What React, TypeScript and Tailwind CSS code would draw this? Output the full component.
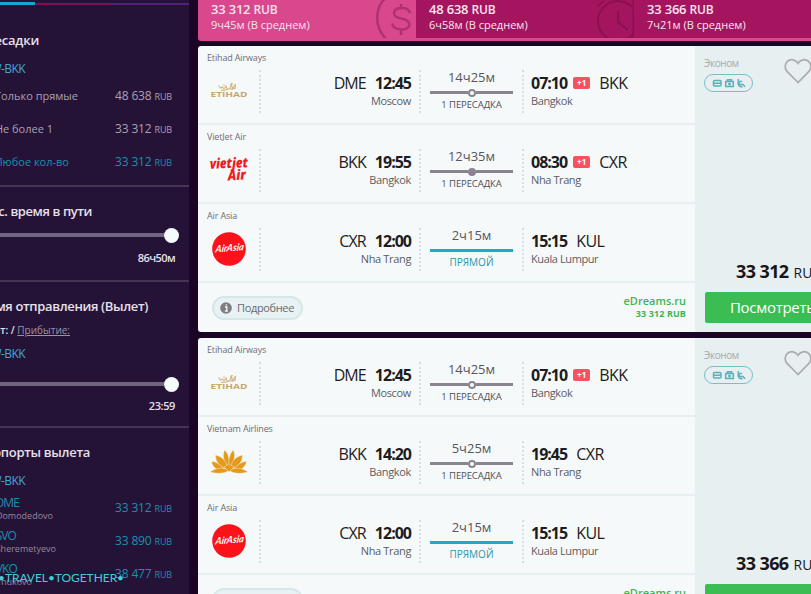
import React from 'react';

interface Leg {
    airline: string;
    logo: 'etihad' | 'vietjet' | 'airasia' | 'vietnam';
    from: string;
    fromCity: string;
    depart: string;
    duration: string;
    stop?: 'ring' | 'dot';
    arrive: string;
    nextDay?: boolean;
    to: string;
    toCity: string;
}

const etihad: Leg = {
    airline: 'Etihad Airways', logo: 'etihad', from: 'DME', fromCity: 'Moscow', depart: '12:45',
    duration: '14ч25м', stop: 'ring', arrive: '07:10', nextDay: true, to: 'BKK', toCity: 'Bangkok',
};

const airAsia: Leg = {
    airline: 'Air Asia', logo: 'airasia', from: 'CXR', fromCity: 'Nha Trang', depart: '12:00',
    duration: '2ч15м', arrive: '15:15', to: 'KUL', toCity: 'Kuala Lumpur',
};

const tickets: { price: string; legs: Leg[] }[] = [
    {
        price: '33 312',
        legs: [
            etihad,
            {
                airline: 'VietJet Air', logo: 'vietjet', from: 'BKK', fromCity: 'Bangkok', depart: '19:55',
                duration: '12ч35м', stop: 'dot', arrive: '08:30', nextDay: true, to: 'CXR', toCity: 'Nha Trang',
            },
            airAsia,
        ],
    },
    {
        price: '33 366',
        legs: [
            etihad,
            {
                airline: 'Vietnam Airlines', logo: 'vietnam', from: 'BKK', fromCity: 'Bangkok', depart: '14:20',
                duration: '5ч25м', stop: 'ring', arrive: '19:45', to: 'CXR', toCity: 'Nha Trang',
            },
            airAsia,
        ],
    },
];

const Logo = ({ name }: { name: Leg['logo'] }) => {
    if (name === 'etihad') {
        return (
            <svg width="40" height="34" viewBox="0 0 40 34" fill="none">
                <path d="M9.500 11.500l2 2.500 2-1 1.500 2 2-3 1 3h2.500l2-4.500 1 4.500 3-5-.5 5M12 16.200c3 .8 5 0 7-1s5 1 7-1M21 10.500l3-1M15 10.500v1.500" stroke="#d3b987" strokeWidth="1.2" />
                <text x="1.500" y="22.800" textLength="37" lengthAdjust="spacingAndGlyphs" fontFamily="Open Sans, sans-serif" fontWeight="700" fontSize="6.800" fill="#c8a76b">ETIHAD</text>
            </svg>
        );
    }
    if (name === 'vietjet') {
        return (
            <svg width="40" height="34" viewBox="0 0 40 34" fill="#f01a24" fontFamily="Open Sans, sans-serif" fontWeight="800" fontStyle="italic">
                <text x="1" y="15" textLength="38" lengthAdjust="spacingAndGlyphs" fontSize="14" transform="rotate(-2 20 15)">vietjet</text>
                <text x="19" y="27" textLength="18" lengthAdjust="spacingAndGlyphs" fontSize="14" transform="rotate(-3 28 27)">Air</text>
            </svg>
        );
    }
    if (name === 'airasia') {
        return (
            <svg width="40" height="34" viewBox="0 0 40 34">
                <circle cx="20" cy="17" r="16.800" fill="#fd1219" />
                <g transform="translate(6 20.500) skewX(-14) rotate(-5)" fontFamily="Lato, sans-serif" fontStyle="italic" fontWeight="700" fontSize="10" fill="#fff">
                    <text textLength="28" lengthAdjust="spacingAndGlyphs">AirAsia</text>
                </g>
            </svg>
        );
    }
    return (
        <svg width="40" height="34" viewBox="0 0 40 34" fill="#e59a1c" stroke="#f6f9fa" strokeWidth=".4">
            <path d="M20 23C13 16 14 9 15.500 5c4 3 5.500 10 4.500 18z" />
            <path d="M20 23c7-7 6-14 4.500-18-4 3-5.500 10-4.500 18z" />
            <path d="M19 25C9 21 6.500 16 6.500 10c8 2 11.500 7 12.500 15z" />
            <path d="M21 25c10-4 12.500-9 12.500-15-8 2-11.500 7-12.500 15z" />
            <path d="M18 27C12 20 7 16 2.500 16.500c1 6 6 10 15.500 10.500z" />
            <path d="M22 27c6-7 11-11 15.500-10.500-1 6-6 10-15.500 10.500z" />
            <path d="M20 25c-7-3-14-2-19 2 8 2 15 2 19-2z" />
            <path d="M20 25c7-3 14-2 19 2-8 2-15 2-19-2z" />
            <path d="M15 22l5-3 5 3-5 5z" />
        </svg>
    );
};

const Dots = () => <div className="mt-6 h-[43px] w-0 self-start border-l-2 border-dotted border-[#d3dfe0]" />;

const LegRow = ({ leg }: { leg: Leg }) => (
    <div className="flex h-[79px] border-b-2 border-[#e6eff1]">
        <div className="w-[61px] shrink-0 pl-[9px] pt-1">
            <div className="h-[16px] whitespace-nowrap text-[9px] leading-[16px] tracking-[-0.15px] text-[#6d6d73]">{leg.airline}</div>
            <div className="ml-[2px] mt-[8px]"><Logo name={leg.logo} /></div>
        </div>
        <Dots />
        <div className="flex w-[158px] flex-col items-end pr-[8px] pt-[26px]">
            <div className="flex items-center gap-[9px] text-[16px] leading-[22px] text-[#1d1c21]">
                <span className="tracking-[-0.9px]">{leg.from}</span>
                <span className="font-bold tracking-[-1px]">{leg.depart}</span>
            </div>
            <div className="text-[11px] leading-[13px] tracking-[-0.35px] text-[#5c5c62]">{leg.fromCity}</div>
        </div>
        <Dots />
        <div className="flex w-[101px] flex-col items-center pt-[22px]">
            <div className="text-[13px] leading-[18px] text-[#56565c]">{leg.duration}</div>
            {leg.stop ? (
                <>
                    <div className="mt-[3px] flex h-[7px] w-[83px] items-center">
                        <div className="h-[3px] flex-1 bg-[#89848f]" />
                        {leg.stop === 'ring' ? (
                            <div className="size-[8px] rounded-full border-2 border-[#89848f] bg-white" />
                        ) : (
                            <div className="size-[8px] rounded-full bg-[#89848f]" />
                        )}
                        <div className="h-[3px] flex-1 bg-[#89848f]" />
                    </div>
                    <div className="mt-[2px] whitespace-nowrap text-[9.5px] leading-[14px] tracking-[-0.1px] text-[#4f4f55]">1 ПЕРЕСАДКА</div>
                </>
            ) : (
                <>
                    <div className="mt-[5px] h-[3px] w-[83px] bg-[#18acc9]" />
                    <div className="mt-[3px] text-[10px] font-medium leading-[15px] text-[#2a95a9]">ПРЯМОЙ</div>
                </>
            )}
        </div>
        <Dots />
        <div className="pl-[7px] pt-[26px]">
            <div className="flex items-center text-[16px] leading-[22px] text-[#1d1c21]">
                <span className="font-bold tracking-[-1px]">{leg.arrive}</span>
                {leg.nextDay && (
                    <span className="ml-[6px] h-[12px] w-[17px] rounded-[2px] bg-[#f9515e] text-center text-[8px] font-bold leading-[12px] text-white">+1</span>
                )}
                <span className="ml-[9px] tracking-[-0.5px]">{leg.to}</span>
            </div>
            <div className="text-[11px] leading-[13px] tracking-[-0.4px] text-[#5c5c62]">{leg.toCity}</div>
        </div>
    </div>
);

const Heart = () => (
    <svg className="shrink-0" width="28" height="26" viewBox="0 0 28 26" fill="none" stroke="#a9adb1" strokeWidth="1.700">
        <path d="M14 24.500L3.300 13.700C.4 10.600.5 6.200 3.200 3.600 6.400.6 11.600 1.200 14 5.300 16.400 1.200 21.600.6 24.800 3.600c2.700 2.600 2.800 7-.1 10.100z" />
    </svg>
);

const Baggage = () => (
    <div className="flex h-[18px] w-[49px] items-center justify-center rounded-full border-[1.5px] border-[#78bec8] text-[#5cb0bb]">
        <svg width="34" height="12" viewBox="0 0 34 12" fill="none" stroke="currentColor" strokeWidth="1.500">
            <rect x="1.500" y="3.500" width="7.500" height="5.500" rx="1" />
            <path d="M1.500 6.200h7.500" />
            <path d="M13.700 4.600h7.600v4.800h-7.600zM15.500 4.400V2.700h4v1.700M17.500 5.800v2.600M16 7.100h3" />
            <path d="M26.300 2c0 3.500.4 5 2.200 5.500h2.500l2 2.200M26 4.500c0 4 1.200 5.500 4.500 5.300M27.500 4.600h2.700" />
        </svg>
    </div>
);

const Ticket = ({ price, legs }: { price: string; legs: Leg[] }) => (
    <div className="flex h-[286px] w-[660px] shrink-0 overflow-hidden rounded-[3px] bg-[#f6f9fa]">
        <div className="w-[497px] shrink-0">
            {legs.map((leg) => (
                <LegRow key={leg.airline} leg={leg} />
            ))}
            <div className="flex h-[49px] items-start justify-between pl-[14px] pr-[9px]">
                <div className="mt-[13px] flex h-[24px] w-[91px] items-center rounded-full border-2 border-[#d6e7e9] bg-[#e8f1f3] pl-[6px]">
                    <svg width="12" height="12" viewBox="0 0 12 12">
                        <circle cx="6" cy="6" r="5.800" fill="#7d7d82" />
                        <path d="M5 5h1.800v4M4.800 9.100h3M5.600 2.800h1.300" stroke="#fff" strokeWidth="1.300" fill="none" />
                    </svg>
                    <span className="ml-[5px] text-[11px] leading-[18px] tracking-[-0.35px] text-[#6a6a6f]">Подробнее</span>
                </div>
                <div className="mt-[10px] text-right font-semibold text-[#3db554]">
                    <div className="text-[11px] leading-[15px]">eDreams.ru</div>
                    <div className="text-[9px] font-bold leading-[12px] tracking-[0.1px]">33 312 RUB</div>
                </div>
            </div>
        </div>
        <div className="flex flex-1 flex-col justify-between bg-[#e7eff1] pb-[9px] pl-[9px] pt-[9px]">
            <div className="flex items-start">
                <div className="w-[80px]">
                    <div className="text-[10px] leading-[16px] tracking-[-0.4px] text-[#a3abb0]">Эконом</div>
                    <div className="mt-[3px]"><Baggage /></div>
                </div>
                <div className="mt-[3px]"><Heart /></div>
            </div>
            <div>
                <div className="flex items-baseline gap-[5px] whitespace-nowrap pl-[32px] leading-[24px] text-[#17161b]">
                    <span className="text-[18px] font-bold tracking-[-0.6px]">{price}</span>
                    <span className="text-[14px]">RUB</span>
                </div>
                <div className="ml-px mt-[7px] flex h-[31px] w-[140px] items-center rounded-[2px] bg-[#3bbd53] pl-[25px] text-[15px] font-medium tracking-[-0.3px] text-white">
                    Посмотреть
                </div>
            </div>
        </div>
    </div>
);

const Price = ({ value }: { value: string }) => (
    <span className="text-[12px] leading-[16px] tracking-[-0.15px]">
        {value} <span className="text-[9px]">RUB</span>
    </span>
);

const Slider = () => (
    <div className="flex h-4 w-[179px] items-center">
        <div className="h-1 flex-1 bg-[#71657f]" />
        <div className="size-[15px] rounded-full bg-[#f5fafc]" />
    </div>
);

// labels are pinned by their right edge and run off the left side of the panel
const Cut = ({ className, children }: { className: string; children: React.ReactNode }) => (
    <div className={`flex justify-end whitespace-nowrap ${className}`}>
        <span>{children}</span>
    </div>
);

const Sidebar = () => (
    <div className="w-[189px] shrink-0 overflow-hidden bg-[#251237] text-[#e6e0ea]">
        <div className="flex h-[5px] items-start pt-[2px]">
            <div className="h-[3px] w-[35px] bg-[#18a5cb]" />
            <div className="mt-px h-[2px] w-[76px] bg-[#7b1258]" />
            <div className="mt-px h-[2px] flex-1 bg-[#55207a]" />
        </div>
        <div className="h-[182px] border-b-2 border-[#463453] pt-[25px]">
            <Cut className="w-[39px] text-[13px] font-semibold leading-[20px] tracking-[-0.2px]">Пересадки</Cut>
            <Cut className="mt-[11px] w-[25px] text-[12px] font-medium leading-[16px] tracking-[-0.6px] text-[#42a6cf]">MOW-BKK</Cut>
            <div className="mt-[3px] text-[#aaa1b1]">
                <div className="flex h-[33px] items-center justify-between pr-[17px]">
                    <Cut className="w-[78px] text-[11px]">Только прямые</Cut>
                    <Price value="48 638" />
                </div>
                <div className="flex h-[33px] items-center justify-between pr-[17px]">
                    <Cut className="w-[53px] text-[11px]">Не более 1</Cut>
                    <Price value="33 312" />
                </div>
                <div className="flex h-[33px] items-center justify-between pr-[17px] text-[#1c8fae]">
                    <Cut className="w-[69px] text-[11px]">Любое кол-во</Cut>
                    <Price value="33 312" />
                </div>
            </div>
        </div>
        <div className="h-[95px] border-b-2 border-[#463453] pt-[14px]">
            <Cut className="w-[92px] text-[13px] font-semibold leading-[20px] tracking-[-0.4px]">Макс. время в пути</Cut>
            <div className="mt-[6px]"><Slider /></div>
            <div className="mt-[7px] pr-[14px] text-right text-[11px] font-semibold leading-[16px] tracking-[-0.6px]">86ч50м</div>
        </div>
        <div className="h-[146px] border-b-2 border-[#463453] pt-[14px]">
            <Cut className="w-[148px] text-[13px] font-semibold leading-[20px] tracking-[-0.35px]">Время отправления (Вылет)</Cut>
            <Cut className="mt-[6px] w-[70px] text-[10px] font-semibold leading-[16px]">
                Вылет: / <span className="font-normal text-[#9c92a5] underline">Прибытие:</span>
            </Cut>
            <Cut className="mt-[8px] w-[25px] text-[12px] font-medium leading-[16px] tracking-[-0.6px] text-[#42a6cf]">MOW-BKK</Cut>
            <div className="mt-[14px]"><Slider /></div>
            <div className="mt-[6px] pr-[14px] text-right text-[11px] font-semibold leading-[16px] tracking-[-0.4px]">23:59</div>
        </div>
        <div className="pt-[14px]">
            <Cut className="w-[90px] text-[13px] font-semibold leading-[20px] tracking-[-0.3px]">Аэропорты вылета</Cut>
            <Cut className="mt-[11px] w-[25px] text-[12px] font-medium leading-[16px] tracking-[-0.6px] text-[#42a6cf]">MOW-BKK</Cut>
            <div className="mt-[3px] text-[#1c8fae]">
                <div className="flex h-[33px] items-center justify-between pr-[17px]">
                    <div>
                        <Cut className="w-[19px] text-[12px] leading-[14px] tracking-[-0.9px]">DME</Cut>
                        <Cut className="w-[53px] text-[9px] leading-[12px] text-[#94899d]">Domodedovo</Cut>
                    </div>
                    <Price value="33 312" />
                </div>
                <div className="flex h-[33px] items-center justify-between pr-[17px]">
                    <div>
                        <Cut className="w-[16px] text-[12px] leading-[14px] tracking-[-0.9px]">SVO</Cut>
                        <Cut className="w-[56px] text-[9px] leading-[12px] text-[#94899d]">Sheremetyevo</Cut>
                    </div>
                    <Price value="33 890" />
                </div>
                <div className="flex h-[33px] items-center justify-between pr-[17px]">
                    <div>
                        <Cut className="w-[17px] text-[12px] leading-[14px] tracking-[-0.9px]">VKO</Cut>
                        <Cut className="w-[32px] text-[9px] leading-[12px] text-[#94899d]">Vnukovo</Cut>
                    </div>
                    <Price value="38 477" />
                </div>
            </div>
        </div>
    </div>
);

const Tab = ({ price, time, className, children }: { price: string; time: string; className: string; children?: React.ReactNode }) => (
    <div className={`flex h-[38px] w-[218px] shrink-0 justify-between overflow-hidden pl-[13px] text-[#fbe3ef] ${className}`}>
        <div className="whitespace-nowrap pt-px">
            <div className="text-[13px] font-semibold leading-[16px] tracking-[-0.2px]">
                {price} <span className="text-[12px]">RUB</span>
            </div>
            <div className="text-[11px] leading-[13px]">{time} (В среднем)</div>
        </div>
        {children}
    </div>
);

export default function App() {
    return (
        <div className="relative flex h-[594px] w-[811px] overflow-hidden bg-[#1b0526] font-['Open_Sans',sans-serif]">
            <Sidebar />
            <div className="ml-[9px] flex w-[613px] shrink-0 flex-col gap-[6px] overflow-hidden">
                <div className="-mb-px flex h-[41px] shrink-0 overflow-hidden rounded-bl-[3px] bg-[#d9478c]">
                    <Tab price="33 312" time="9ч45м" className="bg-[#d9478c]">
                        <svg width="42" height="38" viewBox="0 0 42 38" fill="none" stroke="#b02f75" strokeWidth="2.400">
                            <path d="M14-4C0 6 0 27 12 39" />
                            <path d="M36 13c-1-4-4-5-8-5-10 0-11 9-1 10.500 11 1.500 11 11 1 11-6 0-9-2-10-6M27 4v4M27 30v5" />
                        </svg>
                    </Tab>
                    <Tab price="48 638" time="6ч58м" className="bg-[#a5155f]">
                        <svg width="38" height="38" viewBox="0 0 38 38" fill="none" stroke="#8a1052" strokeWidth="2">
                            <circle cx="22" cy="21" r="20" />
                            <path d="M22 11v11l10 8M2 5.500l6-4.500M37.500 0v38" />
                        </svg>
                    </Tab>
                    <Tab price="33 366" time="7ч21м" className="bg-[#a5155f]" />
                </div>
                {tickets.map((ticket) => (
                    <Ticket key={ticket.price} price={ticket.price} legs={ticket.legs} />
                ))}
            </div>
            <div className="absolute left-[-2px] top-[570px] whitespace-nowrap font-['Lato',sans-serif] text-[12px] leading-[16px] tracking-[-0.05px] text-[#3fd0d6]">
                •TRAVEL•TOGETHER•
            </div>
        </div>
    );
}
